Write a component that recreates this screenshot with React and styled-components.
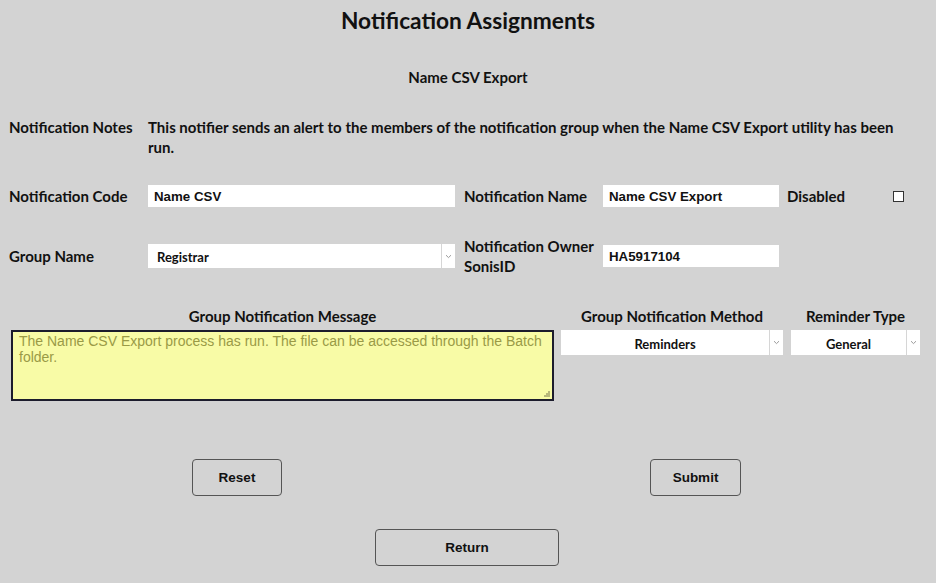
import React from 'react'
import styled, { createGlobalStyle } from 'styled-components'

const Global = createGlobalStyle`
  html, body { margin: 0; padding: 0; background: #d3d3d3; }
  body { font-family: Lato, "Open Sans", sans-serif; color: #111; }
`

const Page = styled.div`
  width: 936px;
  height: 583px;
  background: #d3d3d3;
  box-sizing: border-box;
  padding-top: 8px;
`

const Title = styled.h1`
  margin: 0;
  font-size: 22.7px;
  line-height: 26px;
  font-weight: 700;
  text-align: center;
`

const SubTitle = styled.div`
  margin-top: 33px;
  font-size: 15px;
  line-height: 20px;
  font-weight: 700;
  text-align: center;
`

const NotesRow = styled.div`
  display: flex;
  margin-top: 30px;
  padding-left: 9px;
  font-size: 15px;
  font-weight: 700;
  line-height: 20px;
`

const Label = styled.div`
  width: ${p => p.$w || 139}px;
  flex-shrink: 0;
  font-size: 15px;
  font-weight: 700;
  line-height: 20px;
`

const NotesText = styled.div`
  width: 770px;
`

const FormRow = styled.div`
  display: flex;
  align-items: center;
  padding-left: 9px;
  margin-top: ${p => p.$top}px;
`

const TextInput = styled.div`
  width: ${p => p.$w}px;
  height: 22px;
  background: #fff;
  box-sizing: border-box;
  padding: 0 6px;
  margin-right: ${p => p.$mr || 0}px;
  display: flex;
  align-items: center;
  font-family: "Liberation Sans", Arial, sans-serif;
  font-weight: 700;
  font-size: 13.3px;
  color: #111;
`

const SelectBox = styled.div`
  width: ${p => p.$w}px;
  height: ${p => p.$h || 24}px;
  background: #fff;
  display: flex;
  margin-right: ${p => p.$mr || 0}px;
  box-sizing: border-box;
`

const SelectValue = styled.div`
  flex: 1;
  display: flex;
  align-items: center;
  justify-content: ${p => (p.$center ? 'center' : 'flex-start')};
  padding-left: ${p => (p.$center ? 0 : 9)}px;
  font-size: 13px;
  font-weight: 700;
  padding-top: 2px;
`

const ArrowCell = styled.div`
  width: 13px;
  border-left: 1px solid #d6d6d6;
  display: flex;
  align-items: center;
  justify-content: center;
`

const Check = styled.div`
  width: 9px;
  height: 9px;
  border: 1.5px solid #333;
  background: #fff;
`

const Lower = styled.div`
  display: flex;
  margin-top: 30px;
  padding-left: 11px;
`

const Column = styled.div`
  width: ${p => p.$w}px;
  margin-right: ${p => p.$mr || 0}px;
  display: flex;
  flex-direction: column;
`

const ColHead = styled.div`
  text-align: center;
  font-size: 15px;
  font-weight: 700;
  line-height: 20px;
  margin-bottom: ${p => p.$mb || 4}px;
`

const MessageBox = styled.div`
  height: 71px;
  box-sizing: border-box;
  background: #f8fba6;
  border: 2px solid #1c1c2c;
  padding: 1px 6px;
  font-family: "Liberation Sans", Arial, sans-serif;
  font-size: 14px;
  line-height: 16px;
  color: #9a9a46;
  position: relative;
`

const Grip = styled.svg`
  position: absolute;
  right: 2px;
  bottom: 2px;
`

const ButtonRow = styled.div`
  display: flex;
  margin-top: 58px;
  padding-left: 192px;
  gap: 368px;
`

const Button = styled.button`
  width: ${p => p.$w}px;
  height: 37px;
  background: transparent;
  border: 1px solid #555;
  border-radius: 4px;
  font-family: "Liberation Sans", Arial, sans-serif;
  font-weight: 700;
  font-size: 13.5px;
  color: #111;
  cursor: pointer;
`

const ReturnRow = styled.div`
  display: flex;
  justify-content: center;
  margin-top: 33px;
  padding-right: 2px;
`

const Chevron = () => (
  <svg width="7" height="5" viewBox="0 0 7 5">
    <path d="M1 1.2 L3.5 3.6 L6 1.2" stroke="#9a9a9a" strokeWidth="1" fill="none" />
  </svg>
)

const Select = ({ w, h, mr, center, children }) => (
  <SelectBox $w={w} $h={h} $mr={mr}>
    <SelectValue $center={center}>{children}</SelectValue>
    <ArrowCell>
      <Chevron />
    </ArrowCell>
  </SelectBox>
)

export default function App() {
  return (
    <Page>
      <Global />
      <Title>Notification Assignments</Title>
      <SubTitle>Name CSV Export</SubTitle>

      <NotesRow>
        <Label>Notification Notes</Label>
        <NotesText>
          This notifier sends an alert to the members of the notification group when the Name CSV Export utility has been run.
        </NotesText>
      </NotesRow>

      <FormRow $top={28}>
        <Label>Notification Code</Label>
        <TextInput $w={307} $mr={9}>Name CSV</TextInput>
        <Label>Notification Name</Label>
        <TextInput $w={176} $mr={8}>Name CSV Export</TextInput>
        <Label $w={106}>Disabled</Label>
        <Check />
      </FormRow>

      <FormRow $top={29}>
        <Label>Group Name</Label>
        <Select w={307} mr={9}>Registrar</Select>
        <Label>
          Notification Owner
          <br />
          SonisID
        </Label>
        <TextInput $w={176}>HA5917104</TextInput>
      </FormRow>

      <Lower>
        <Column $w={543} $mr={7}>
          <ColHead $mb={4}>Group Notification Message</ColHead>
          <MessageBox>
            The Name CSV Export process has run. The file can be accessed through the Batch folder.
            <Grip width="7" height="7" viewBox="0 0 7 7">
              <rect x="5" y="1" width="2" height="2" fill="#b8b87a" />
              <rect x="3" y="3" width="2" height="2" fill="#b8b87a" />
              <rect x="5" y="3" width="2" height="2" fill="#b8b87a" />
              <rect x="1" y="5" width="2" height="2" fill="#b8b87a" />
              <rect x="3" y="5" width="2" height="2" fill="#b8b87a" />
              <rect x="5" y="5" width="2" height="2" fill="#b8b87a" />
            </Grip>
          </MessageBox>
        </Column>
        <Column $w={222} $mr={8}>
          <ColHead>Group Notification Method</ColHead>
          <Select w={222} h={25} center>Reminders</Select>
        </Column>
        <Column $w={129}>
          <ColHead>Reminder Type</ColHead>
          <Select w={129} h={25} center>General</Select>
        </Column>
      </Lower>

      <ButtonRow>
        <Button $w={90}>Reset</Button>
        <Button $w={91}>Submit</Button>
      </ButtonRow>

      <ReturnRow>
        <Button $w={184}>Return</Button>
      </ReturnRow>
    </Page>
  )
}
